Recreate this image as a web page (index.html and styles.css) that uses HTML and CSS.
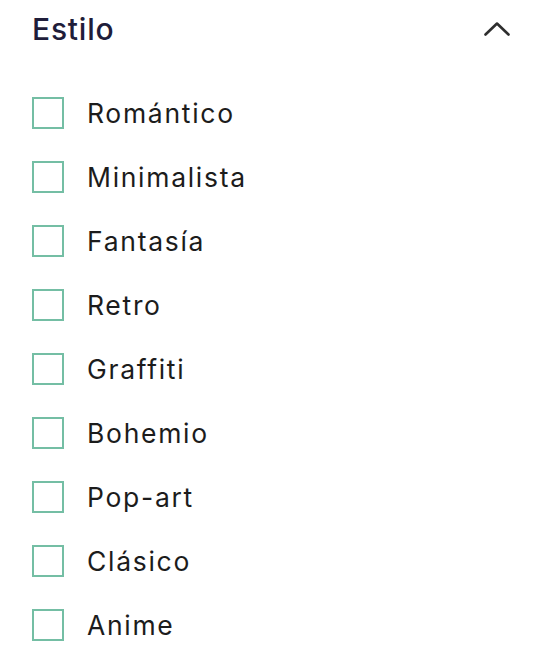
FILE: index.html
```html
<!DOCTYPE html>
<html lang="es">
<head>
<meta charset="utf-8">
<title>Estilo</title>
<link rel="stylesheet" href="styles.css">
</head>
<body>
<section class="panel">
  <header class="panel-head">
    <h2 class="panel-title">Estilo</h2>
    <svg class="chevron" width="26" height="14" viewBox="0 0 26 14" aria-hidden="true">
      <path d="M1.5 12.5 L13 1.5 L24.5 12.5" fill="none" stroke="#2e2e2e" stroke-width="2.6" stroke-linecap="round" stroke-linejoin="round"/>
    </svg>
  </header>
  <ul class="options">
    <li class="option"><span class="box"></span><span class="label">Romántico</span></li>
    <li class="option"><span class="box"></span><span class="label">Minimalista</span></li>
    <li class="option"><span class="box"></span><span class="label">Fantasía</span></li>
    <li class="option"><span class="box"></span><span class="label">Retro</span></li>
    <li class="option"><span class="box"></span><span class="label">Graffiti</span></li>
    <li class="option"><span class="box"></span><span class="label">Bohemio</span></li>
    <li class="option"><span class="box"></span><span class="label">Pop-art</span></li>
    <li class="option"><span class="box"></span><span class="label">Clásico</span></li>
    <li class="option"><span class="box"></span><span class="label">Anime</span></li>
  </ul>
</section>
</body>
</html>
```

FILE: styles.css
```css
html, body {
  margin: 0;
  padding: 0;
  background: #ffffff;
}
body {
  font-family: Inter, "Open Sans", "Liberation Sans", sans-serif;
}
.panel {
  width: 542px;
  box-sizing: border-box;
  padding: 0 32px 0 32px;
}
.panel-head {
  height: 58px;
  display: flex;
  align-items: center;
  justify-content: space-between;
}
.panel-title {
  margin: 0;
  font-size: 30px;
  font-weight: 500;
  letter-spacing: 0.8px;
  color: #1f1d3a;
  line-height: 1;
}
.chevron {
  display: block;
}
.options {
  list-style: none;
  margin: 0;
  padding: 39px 0 0 0;
  display: flex;
  flex-direction: column;
  gap: 32px;
}
.option {
  display: flex;
  align-items: center;
  height: 32px;
}
.box {
  width: 32px;
  height: 32px;
  box-sizing: border-box;
  border: 2px solid #74bea4;
  flex: none;
}
.label {
  margin-left: 23px;
  font-size: 26.5px;
  font-weight: 400;
  letter-spacing: 1.7px;
  color: #1c1c1c;
  line-height: 1;
}
```
